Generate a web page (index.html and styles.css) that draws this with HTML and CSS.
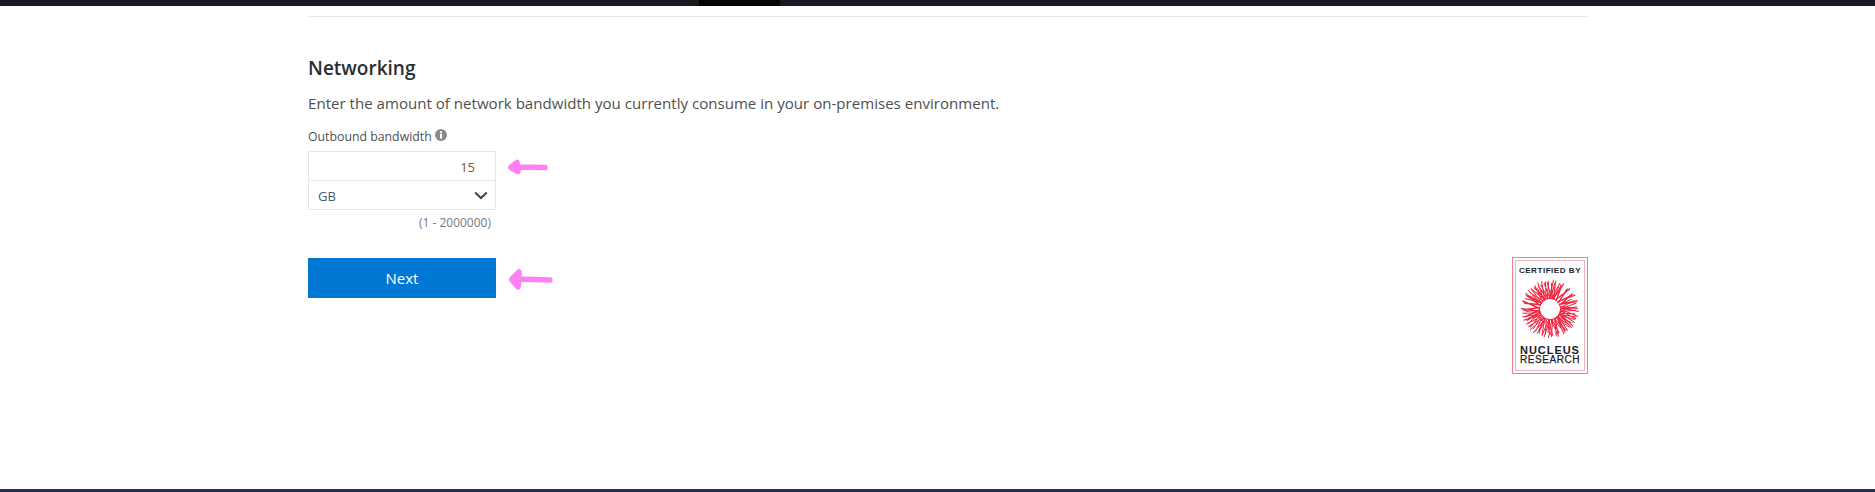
FILE: index.html
```html
<!DOCTYPE html>
<html lang="en">
<head>
<meta charset="utf-8">
<title>Networking</title>
<link rel="stylesheet" href="styles.css">
</head>
<body>
<div class="topbar"><div class="topbar-tab"></div></div>
<main class="content">
  <hr class="rule">
  <h2 class="title">Networking</h2>
  <p class="intro">Enter the amount of network bandwidth you currently consume in your on-premises environment.</p>
  <div class="label">Outbound bandwidth
    <svg class="info" viewBox="0 0 12 12" width="12" height="12" aria-hidden="true"><circle cx="6" cy="6" r="6" fill="#8a8a8a"/><rect x="5" y="5" width="2" height="4.6" fill="#fff"/><rect x="5" y="2.4" width="2" height="1.8" fill="#fff"/></svg>
  </div>
  <div class="field-row">
    <div class="field">
      <div class="value">15</div>
      <div class="unit"><span>GB</span>
        <svg class="chev" viewBox="0 0 14 9" width="14" height="9" aria-hidden="true"><path d="M1.2 1.5 7 7l5.800-5.500" fill="none" stroke="#3f4349" stroke-width="2"/></svg>
      </div>
    </div>
    <svg class="arrow arrow-top" viewBox="0 0 42 18" width="42" height="18" aria-hidden="true"><path d="M4 9 10 4.500l1 4.500 27 .6M4 9.500l7 4V9" fill="#ff80f5" stroke="#ff80f5" stroke-width="5.500" stroke-linecap="round" stroke-linejoin="round"/></svg>
  </div>
  <div class="range">(1 - 2000000)</div>
  <div class="action-row">
    <button class="next">Next</button>
    <svg class="arrow arrow-bottom" viewBox="0 0 46 24" width="46" height="24" aria-hidden="true"><path d="M4 12 11 5v7l31 1M4 13l6 7 1-8" fill="#ff80f5" stroke="#ff80f5" stroke-width="5.500" stroke-linecap="round" stroke-linejoin="round"/></svg>
    <div class="badge">
      <div class="badge-inner">
        <div class="cert">CERTIFIED BY</div>
        <svg class="burst" viewBox="0 0 60 60" width="60" height="60" aria-hidden="true">
          <defs>
            <path id="rays" d="M30 20 36 1.600M31.400 20.100 27.200 3.100M32.400 20.300 43.100 5.300M33.700 20.700 34.500 4.400M35 21.300 50.200 9.100M36.200 22.100 41 5.300M37.200 23 53.700 15.200M37.900 23.800 46.700 10.100M30.700 20 32 6"/>
          </defs>
          <g fill="none" stroke="#ee2440" stroke-width="1">
            <use href="#rays"/>
            <use href="#rays" transform="rotate(61 30 30)"/>
            <use href="#rays" transform="rotate(119 30 30)"/>
            <use href="#rays" transform="rotate(180 30 30)"/>
            <use href="#rays" transform="rotate(242 30 30)"/>
            <use href="#rays" transform="rotate(299 30 30)"/>
            <use href="#rays" transform="rotate(17 30 30)"/>
            <use href="#rays" transform="rotate(83 30 30)"/>
            <use href="#rays" transform="rotate(139 30 30)"/>
            <use href="#rays" transform="rotate(203 30 30)"/>
            <use href="#rays" transform="rotate(259 30 30)"/>
            <use href="#rays" transform="rotate(323 30 30)"/>
          </g>
        </svg>
        <div class="nucleus">NUCLEUS</div>
        <div class="research">RESEARCH</div>
      </div>
    </div>
  </div>
</main>
<div class="footerbar"></div>
</body>
</html>
```
FILE: styles.css
```css
* { box-sizing: border-box; }
html, body { margin: 0; padding: 0; height: 100%; }
body {
  display: flex;
  flex-direction: column;
  height: 492px;
  overflow: hidden;
  background: #fff;
  font-family: "Open Sans", "Noto Sans", sans-serif;
  color: #505050;
}
.topbar { height: 6px; background: #1a1a20; padding-left: 699px; flex: none; }
.topbar-tab { width: 81px; height: 6px; background: #050505; }
.content { flex: 1; width: 1280px; margin-left: 308px; padding-top: 10px; }
.rule { height: 1px; margin: 0; border: 0; background: #e9e9e9; }
.title { margin: 39px 0 0; font-size: 19px; line-height: 24px; font-weight: 600; color: #2b2e33; }
.intro { margin: 12px 0 0; font-size: 15.080px; line-height: 22px; color: #4f4f4f; }
.label { margin-top: 14px; height: 18px; font-size: 12.300px; line-height: 18px; color: #4f4f4f; display: flex; align-items: flex-start; gap: 3px; }
.info { margin-top: 1px; }
.field-row { display: flex; align-items: center; margin-top: 5px; }
.field { width: 188px; height: 59px; border: 1px solid #e8e8e8; }
.value { height: 29px; line-height: 31px; padding-right: 20px; text-align: right; font-size: 13px; color: #7c5a2e; border-bottom: 1px solid #e8e8e8; }
.unit { height: 28px; display: flex; justify-content: space-between; align-items: center; padding: 1px 7px 0 9px; font-size: 13px; color: #4a5a6a; }
.arrow { flex: none; }
.arrow-top { margin-left: 11px; margin-top: -27px; }
.range { width: 188px; padding-right: 5px; margin-top: 4px; text-align: right; font-size: 12px; line-height: 18px; color: #7a7a7a; }
.action-row { display: flex; align-items: flex-start; margin-top: 26px; }
.next { width: 188px; height: 40px; border: 0; padding: 0; background: #0078d4; color: #fff; font-family: inherit; font-size: 15px; }
.arrow-bottom { margin-left: 12px; margin-top: 9px; }
.badge { margin-left: auto; width: 76px; height: 117px; margin-top: -1px; padding: 2px; border: 1px solid #f57f8d; }
.badge-inner { height: 100%; border: 1px solid #f9b6be; display: flex; flex-direction: column; align-items: center; padding-top: 5px; font-family: "Liberation Sans", Arial, sans-serif; color: #1d1d1f; }
.cert { font-size: 8px; line-height: 9px; font-weight: 700; letter-spacing: .55px; white-space: nowrap; }
.burst { margin-top: 4px; flex: none; }
.nucleus { margin-top: 6px; font-size: 11px; line-height: 10px; font-weight: 700; letter-spacing: .95px; }
.research { font-size: 10px; line-height: 9px; letter-spacing: .55px; -webkit-text-stroke: .25px #1d1d1f; }
.footerbar { height: 3px; flex: none; background: #1f3557; }
```
